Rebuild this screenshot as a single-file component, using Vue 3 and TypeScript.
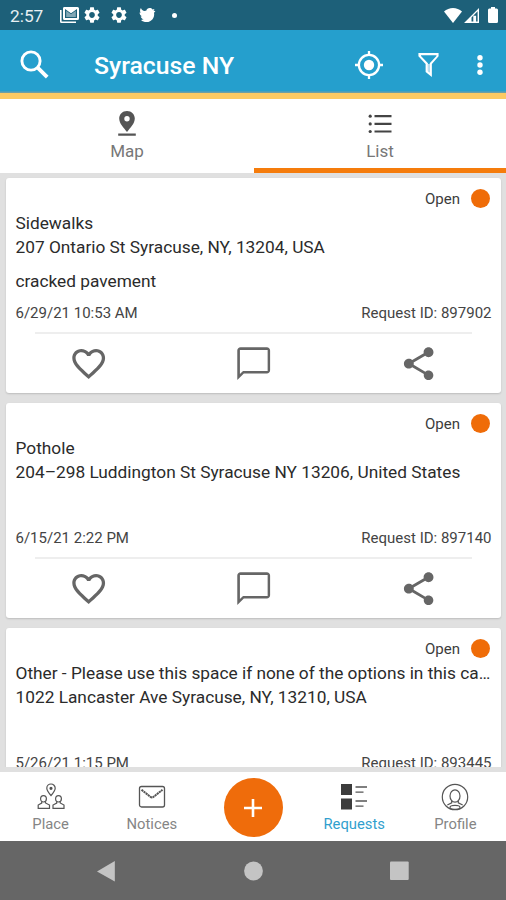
<script setup lang="ts">
import { ref } from 'vue'

interface ServiceRequest {
  id: number
  category: string
  address: string
  note: string
  created: string
  status: string
}

const city = 'Syracuse NY'
const activeTab = ref<'map' | 'list'>('list')
const requests: ServiceRequest[] = [
  { id: 897902, category: 'Sidewalks', address: '207 Ontario St Syracuse, NY, 13204, USA', note: 'cracked pavement', created: '6/29/21 10:53 AM', status: 'Open' },
  { id: 897140, category: 'Pothole', address: '204–298 Luddington St Syracuse NY 13206, United States', note: '', created: '6/15/21 2:22 PM', status: 'Open' },
  { id: 893445, category: 'Other - Please use this space if none of the options in this ca…', address: '1022 Lancaster Ave Syracuse, NY, 13210, USA', note: '', created: '5/26/21 1:15 PM', status: 'Open' },
]
const gearPath = 'M19.14 12.94c.04-.3.06-.61.06-.94 0-.32-.02-.64-.07-.94l2.03-1.58c.18-.14.23-.41.12-.61l-1.92-3.32c-.12-.22-.37-.29-.59-.22l-2.39.96c-.5-.38-1.03-.7-1.62-.94l-.36-2.54c-.04-.24-.24-.41-.48-.41h-3.84c-.24 0-.43.17-.47.41l-.36 2.54c-.59.24-1.13.57-1.62.94l-2.39-.96c-.22-.08-.47 0-.59.22L2.74 8.87c-.12.21-.08.47.12.61l2.03 1.58c-.05.3-.09.63-.09.94s.02.64.07.94l-2.03 1.58c-.18.14-.23.41-.12.61l1.92 3.32c.12.22.37.29.59.22l2.39-.96c.5.38 1.03.7 1.62.94l.36 2.54c.05.24.24.41.48.41h3.84c.24 0 .44-.17.47-.41l.36-2.54c.59-.24 1.13-.56 1.62-.94l2.39.96c.22.08.47 0 .59-.22l1.92-3.32c.12-.22.07-.47-.12-.61l-2.01-1.58zM12 15.6c-1.98 0-3.6-1.62-3.6-3.6s1.62-3.6 3.6-3.6 3.6 1.62 3.6 3.6-1.62 3.6-3.6 3.6z'
</script>

<template>
  <div class="screen">
    <header class="status-bar">
      <span class="clock">2:57</span>
      <svg class="s-mail" viewBox="0 0 19 16" fill="#fff"><path d="M0 3h1.6v11.4H16V16H1.500Q0 16 0 14.500z" /><path fill-rule="evenodd" d="M4 0h13.500Q19 0 19 1.500v10q0 1.500-1.500 1.500H4.500Q3 13 3 11.500v-10Q3 0 4 0zM5 2v9h12V2l-6 4.200z" /><path d="M6.200 3.800L11 7.300l4.800-3.500V10H6.200z" opacity=".45" /></svg>
      <svg class="s-gear" viewBox="2 2 20 20" fill="#fff"><path :d="gearPath" /></svg>
      <svg class="s-gear second" viewBox="2 2 20 20" fill="#fff"><path :d="gearPath" /></svg>
      <svg class="s-bird" viewBox="0 0 17 15" fill="#fff"><path d="M1.500 0C2 1.800 3.500 3 5.500 3.300L7.300 2.800C7.600 1 9 0 10.800 0c1.300 0 2.300.5 3 1.500L16 1l-1 2 2 .2-1.500 1.800C16.500 10 13 15 7.500 15c-2.300 0-4.500-.7-5.900-2.200l2.800-.7C2.700 11.500 1.700 10.500 1.200 9L2.500 8.800C.8 7.800 0 6.300 0 4.700l1.100.4C.2 3.500.4 1.500 1.500 0z" /></svg>
      <i class="s-dot"></i>
      <span class="grow"></span>
      <svg class="s-wifi" viewBox="0 0 18 15" fill="#fff"><path d="M0 3.500C5-1.200 13-1.200 18 3.500L9 15z" /></svg>
      <svg class="s-cell" viewBox="0 0 15 15"><path fill="#fff" fill-rule="evenodd" d="M15 0v15H0zM13.600 3.200L7.500 9.500v4.100h1.800V7.800h2.800v5.800h1.500z" /></svg>
      <svg class="s-battery" viewBox="0 0 10 16" fill="#fff"><path d="M3 0h4v1.500h1.700Q10 1.500 10 3v11.500Q10 16 8.500 16h-7Q0 16 0 14.500V3q0-1.500 1.300-1.500H3z" /></svg>
    </header>

    <header class="app-bar">
      <svg class="a-search" viewBox="0 0 29 29" fill="none" stroke="#fff"><circle cx="11" cy="11" r="9.100" stroke-width="2.900" /><path d="M17.400 17.400l9.800 9.800" stroke-width="3.800" /></svg>
      <h1>{{ city }}</h1>
      <span class="grow"></span>
      <svg class="a-locate" viewBox="0 0 28 28" fill="none" stroke="#fff"><circle cx="14" cy="14" r="10.100" stroke-width="2.300" /><circle cx="14" cy="14" r="5.200" fill="#fff" stroke="none" /><path d="M14 0v4M14 24v4M0 14h4M24 14h4" stroke-width="2.300" /></svg>
      <svg class="a-filter" viewBox="0 0 21 25"><path fill="#fff" fill-rule="evenodd" d="M0 0h21v3.300L14 11.500V25l-6.500-5.300v-8.200L0 3.300zM2.700 2.400v.6l7.200 7.800v7.800l1.900 1.500v-9.300l7-7.800v-.6z" /><path d="M9.800 11.500h2.200v9l-2.200-1.800z" fill="#b8def0" /></svg>
      <svg class="a-more" viewBox="0 0 6 20" fill="#fff"><circle cx="3" cy="2.800" r="2.700" /><circle cx="3" cy="10" r="2.700" /><circle cx="3" cy="17.200" r="2.700" /></svg>
    </header>

    <nav class="tabs">
      <button class="tab" :class="{ active: activeTab === 'map' }" @click="activeTab = 'map'">
        <svg viewBox="0 0 28 28" fill="#555"><path fill-rule="evenodd" d="M14 2c4.500 0 7.800 3.400 7.800 7.600 0 5-4.600 9.400-7.800 13.400-3.200-4-7.800-8.400-7.800-13.400C6.200 5.400 9.500 2 14 2zm0 5a2.700 2.700 0 1 0 0 5.400A2.700 2.700 0 0 0 14 7zM5.200 24.400h17.600v2.300H5.200z" /></svg>
        <span>Map</span>
      </button>
      <button class="tab" :class="{ active: activeTab === 'list' }" @click="activeTab = 'list'">
        <svg viewBox="0 0 28 28" fill="#444"><path d="M8.500 6h17v2.300h-17zM8.500 13.800h17v2.200h-17zM8.500 21.400h17v2.200h-17z" /><circle cx="4.200" cy="7.200" r="1.600" /><circle cx="4.200" cy="14.900" r="1.600" /><circle cx="4.200" cy="22.500" r="1.600" /></svg>
        <span>List</span>
      </button>
    </nav>

    <main class="feed">
      <article v-for="request in requests" :key="request.id" class="card">
        <div class="state"><span>{{ request.status }}</span><i></i></div>
        <h2>{{ request.category }}</h2>
        <p class="address">{{ request.address }}</p>
        <p class="note">{{ request.note }}</p>
        <div class="meta"><span>{{ request.created }}</span><span>Request ID: {{ request.id }}</span></div>
        <hr />
        <div class="actions">
          <svg viewBox="0 0 24 24"><path d="M16.500 3c-1.740 0-3.410.81-4.500 2.090C10.910 3.810 9.240 3 7.500 3 4.420 3 2 5.420 2 8.500c0 3.780 3.400 6.860 8.550 11.540L12 21.350l1.450-1.320C18.600 15.360 22 12.280 22 8.500 22 5.420 19.580 3 16.500 3zm-4.400 15.550l-.1.100-.1-.1C7.140 14.240 4 11.390 4 8.500 4 6.500 5.500 5 7.500 5c1.540 0 3.040.99 3.570 2.360h1.870C13.460 5.990 14.960 5 16.500 5c2 0 3.500 1.500 3.500 3.500 0 2.890-3.140 5.740-7.900 10.050z" /></svg>
          <svg viewBox="0 0 24 24"><path d="M20 2H4c-1.100 0-2 .9-2 2v18l4-4h14c1.100 0 2-.9 2-2V4c0-1.100-.9-2-2-2zm.5 14.400H5.500L3.600 18.300V3.600h16.900z" /></svg>
          <svg viewBox="0 0 24 24"><path d="M18 16.080c-.76 0-1.440.3-1.960.77L8.910 12.700c.05-.23.09-.46.09-.7s-.04-.47-.09-.7l7.050-4.110c.54.5 1.250.81 2.040.81 1.660 0 3-1.340 3-3s-1.340-3-3-3-3 1.340-3 3c0 .24.04.47.09.7L8.040 9.810C7.500 9.310 6.790 9 6 9c-1.660 0-3 1.340-3 3s1.340 3 3 3c.79 0 1.500-.31 2.040-.81l7.120 4.160c-.05.21-.08.43-.08.65 0 1.610 1.310 2.920 2.920 2.920s2.920-1.310 2.920-2.920-1.310-2.920-2.920-2.920z" /></svg>
        </div>
      </article>
    </main>

    <nav class="bottom-nav">
      <button class="item">
        <svg viewBox="0 0 28 28" fill="none" stroke="#555" stroke-width="1.200"><path d="M14 12.500C11.500 9.600 9.800 7.600 9.800 5.200a4.200 4.200 0 0 1 8.400 0c0 2.400-1.700 4.400-4.200 7.300z" /><circle cx="14" cy="5.300" r="1" fill="#222" /><ellipse cx="6.500" cy="15.800" rx="2.900" ry="3.200" /><ellipse cx="21.500" cy="15.800" rx="2.900" ry="3.200" /><path d="M4.700 18.500v1.600L1.200 22v3.400h11.300V22l-4-2v-1.500M19.700 18.500v1.600L16 22v3.400h11V22l-3.800-2v-1.500" /></svg>
        <span>Place</span>
      </button>
      <button class="item">
        <svg viewBox="0 0 28 28" fill="none" stroke="#555" stroke-width="1.300"><rect x="1.500" y="3.500" width="25" height="20.500" rx="2" /><path d="M3.500 6.800l8.900 7q1.600 1.300 3.200 0l8.900-7" stroke-width="2" stroke-dasharray="2.200 .5" /></svg>
        <span>Notices</span>
      </button>
      <button class="add" aria-label="Add"><svg viewBox="0 0 20 20"><path d="M10 1v18M1 10h18" stroke="#fff" stroke-width="2.600" /></svg></button>
      <button class="item current">
        <svg viewBox="0 0 28 28"><path d="M1 1h11v11H1zM1 15.500h11v11H1z" fill="#3c3c3c" /><path d="M15.500 4h11.500M15.500 9.200h8M15.500 18h11.500M15.500 23.200h8" stroke="#555" stroke-width="1.300" /></svg>
        <span>Requests</span>
      </button>
      <button class="item">
        <svg viewBox="0 0 28 28" fill="none" stroke="#555" stroke-width="1.200"><circle cx="14" cy="14" r="12.700" /><ellipse cx="14" cy="13" rx="5" ry="6.200" /><path d="M10.700 18v1.900L6.300 22M17.300 18v1.900l4.400 2.100" /><ellipse cx="14" cy="24.400" rx="5" ry="2" /></svg>
        <span>Profile</span>
      </button>
    </nav>

    <footer class="system-nav">
      <span><svg viewBox="0 0 20 20"><path d="M0 10.500L17.800 0v20.500z" /></svg></span>
      <span><svg viewBox="0 0 20 20"><circle cx="10.500" cy="10" r="9.400" /></svg></span>
      <span><svg viewBox="0 0 20 20"><rect x="0" y=".5" width="18.700" height="18.600" rx="1" /></svg></span>
    </footer>
  </div>
</template>

<style>
body { margin: 0; }
</style>

<style scoped>
.screen { width: 506px; height: 900px; display: flex; flex-direction: column; overflow: hidden; background: #e0e0e0; font-family: Roboto, "Liberation Sans", sans-serif; color: #2b2b2b; }
svg { display: block; flex: none; overflow: visible; }
button { border: 0; padding: 0; background: none; font: inherit; }
h1, h2, p, hr { margin: 0; border: 0; }
.grow { flex: 1; }

.status-bar { flex: none; height: 30px; box-sizing: border-box; background: #1d6079; display: flex; align-items: center; padding: 0 8px 0 10px; }
.clock { width: 50px; font-size: 17.300px; line-height: 30px; color: #e8f0f3; padding-top: 2px; }
.s-mail { width: 19px; height: 16px; }
.s-gear { width: 16px; height: 16px; margin-left: 5px; }
.s-gear.second { margin-left: 11px; }
.s-bird { width: 17px; height: 14px; margin-left: 12px; }
.s-dot { width: 5px; height: 5px; border-radius: 50%; background: #fff; margin-left: 16px; }
.s-wifi { width: 18px; height: 15px; }
.s-cell { width: 15px; height: 15px; margin-left: 2px; }
.s-battery { width: 10px; height: 16px; margin-left: 9px; }

.app-bar { flex: none; height: 69px; box-sizing: border-box; background: #259fcd; border-bottom: 6px solid #fdca62; box-shadow: inset 0 -1.500px 0 #6e9fa5; display: flex; align-items: center; padding: 6px 23.500px 0 20px; }
.a-search { width: 29px; height: 29px; }
h1 { margin-left: 45px; font-size: 24.800px; line-height: 30px; font-weight: 500; color: #fff; padding-top: 2px; }
.a-locate { width: 28px; height: 28px; }
.a-filter { width: 21px; height: 24px; margin-left: 35px; }
.a-more { width: 6px; height: 20px; margin-left: 38px; }

.tabs { flex: none; height: 74px; display: grid; grid-template-columns: 254px 252px; background: #fff; }
.tab { box-sizing: border-box; display: flex; flex-direction: column; align-items: center; padding-top: 10px; color: #777; font-size: 17px; line-height: 20px; border-bottom: 5px solid transparent; }
.tab.active { border-color: #f57c0c; }
.tab svg { width: 28px; height: 28px; margin-bottom: 4px; }

.feed { flex: none; height: 594px; box-sizing: border-box; overflow: hidden; padding: 5px 5px 0 6px; display: flex; flex-direction: column; gap: 10px; }
.card { flex: none; height: 215px; background: #fff; border-radius: 3px; box-shadow: 0 1px 2px rgba(0, 0, 0, .16); }
.state { display: flex; justify-content: flex-end; align-items: center; gap: 11px; height: 19px; padding: 10.500px 11px 0 0; font-size: 15px; color: #3c3c3c; }
.state span { padding-top: 2px; }
.state i { width: 19px; height: 19px; border-radius: 50%; background: #ef6c08; }
h2, .address, .note { padding: 0 9.500px; font-size: 17.300px; line-height: 24px; height: 24px; font-weight: 400; white-space: nowrap; }
h2 { margin-top: 3.500px; }
.note { margin-top: 10px; }
.meta { display: flex; justify-content: space-between; margin-top: 10px; padding: 0 9.500px; height: 20px; line-height: 20px; font-size: 15px; color: #444; }
hr { height: 2px; margin: 9px 29px 0; background: #eee; }
.actions { display: grid; grid-template-columns: repeat(3, 1fr); justify-items: center; padding-top: 10px; }
.actions svg { width: 39.400px; height: 39.400px; fill: #666; }

.bottom-nav { flex: none; height: 74px; box-sizing: border-box; border-top: 5px solid #e0e0e0; background: #fff; display: grid; grid-template-columns: repeat(5, 1fr); justify-items: center; }
.item { display: flex; flex-direction: column; align-items: center; padding-top: 11px; gap: 4px; font-size: 14.800px; line-height: 18px; color: #858585; }
.item svg { width: 28px; height: 28px; }
.item.current { color: #319fce; }
.add { width: 59px; height: 59px; margin: 6px 0 0 1px; border-radius: 50%; background: #ef6c0b; display: grid; place-items: center; }
.add svg { width: 20px; height: 20px; }

.system-nav { flex: none; height: 59px; background: #666; display: grid; grid-template-columns: repeat(3, 146.500px); justify-content: center; align-items: center; justify-items: center; fill: #c4c4c4; }
.system-nav svg { width: 20px; height: 20px; }
</style>
